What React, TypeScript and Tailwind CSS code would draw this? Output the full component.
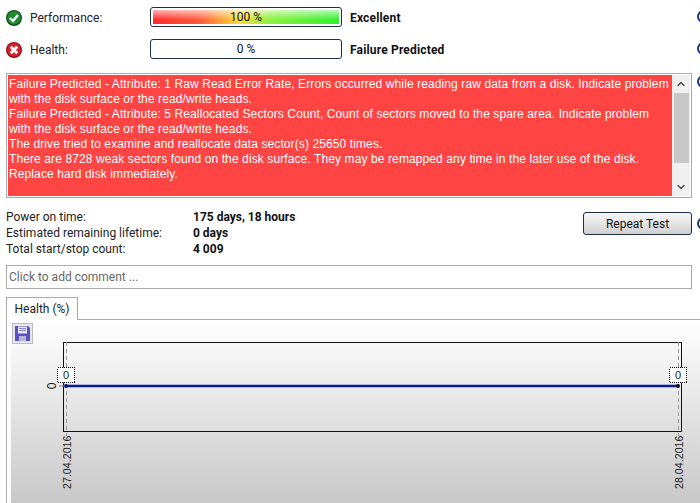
import React from "react";
import { ChevronUp, ChevronDown } from "lucide-react";

function StatusIcon({ ok }: { ok: boolean }) {
  return (
    <svg width="16" height="16" viewBox="0 0 16 16" className="shrink-0">
      <circle cx="8" cy="8" r="8" fill={ok ? "#12501f" : "#8e1018"} />
      <circle cx="8" cy="7.8" r="6.8" fill={ok ? "#1f8a2e" : "#d8212b"} />
      {ok ? (
        <path d="M4 8 L7 11 L12 5" stroke="#fff" strokeWidth="2.4" fill="none" />
      ) : (
        <path d="M4.8 4.8 L11.2 11.2 M11.2 4.8 L4.8 11.2" stroke="#fff" strokeWidth="2.8" fill="none" />
      )}
    </svg>
  );
}

function Meter({ label, ok, value, result, fill }: { label: string; ok: boolean; value: string; result: string; fill?: boolean }) {
  return (
    <div className="flex items-center h-5">
      <div className="w-[24px] shrink-0 pt-[1px]">
        <StatusIcon ok={ok} />
      </div>
      <div className="w-[120px] shrink-0 pt-[2px] text-[12px] text-[#222]">{label}</div>
      <div className="w-[192px] h-5 shrink-0 border border-[#1c2f4a] rounded-[3px] p-[2px] bg-white">
        <div
          className={
            "h-full flex items-center justify-center text-[12px] leading-none text-[#111] " +
            (fill
              ? "bg-[linear-gradient(180deg,rgba(255,255,255,0.65)_0%,rgba(255,255,255,0)_70%),linear-gradient(90deg,#ff2a2a_0%,#ff5a3a_25%,#ffd83a_46%,#90f040_62%,#30f030_100%)]"
              : "")
          }
        >
          {value}
        </div>
      </div>
      <div className="ml-2 pt-[2px] text-[12px] font-bold tracking-[0.17px] text-[#111]">{result}</div>
    </div>
  );
}

function ArcEdge({ top }: { top: string }) {
  return <div className={"absolute left-[697px] w-[13px] h-[13px] rounded-full border-2 border-[#1a3a7a] bg-white " + top} />;
}

const messages = [
  "Failure Predicted - Attribute: 1 Raw Read Error Rate, Errors occurred while reading raw data from a disk. Indicate problem with the disk surface or the read/write heads.",
  "Failure Predicted - Attribute: 5 Reallocated Sectors Count, Count of sectors moved to the spare area. Indicate problem with the disk surface or the read/write heads.",
  "The drive tried to examine and reallocate data sector(s) 25650 times.",
  "There are 8728 weak sectors found on the disk surface. They may be remapped any time in the later use of the disk.",
  "Replace hard disk immediately.",
];

const stats = [
  ["Power on time:", "175 days, 18 hours"],
  ["Estimated remaining lifetime:", "0 days"],
  ["Total start/stop count:", "4 009"],
];

function Chart() {
  return (
    <svg width="689" height="183" viewBox="0 0 689 183" className="absolute left-0 top-0">
      <g transform="translate(-11,-320)">
        <rect x="63.5" y="342.5" width="618" height="89" fill="none" stroke="#111" />
        <line x1="66.5" y1="342" x2="66.5" y2="436" stroke="#999" strokeDasharray="4 3" />
        <line x1="678.5" y1="342" x2="678.5" y2="436" stroke="#999" strokeDasharray="4 3" />
        <line x1="59" y1="386" x2="64" y2="386" stroke="#777" />
        <line x1="66" y1="386" x2="678" y2="386" stroke="#0a1a96" strokeWidth="2.5" />
        <circle cx="66" cy="386" r="2" fill="#0a1a60" />
        <circle cx="678" cy="386" r="2" fill="#111" />
        <rect x="57.5" y="367.5" width="17" height="15" fill="#fff" />
        <rect x="669.5" y="367.5" width="17" height="15" fill="#fff" />
        <rect x="57.5" y="367.5" width="17" height="15" fill="none" stroke="#000" strokeDasharray="1 1" shapeRendering="crispEdges" />
        <rect x="669.5" y="367.5" width="17" height="15" fill="none" stroke="#000" strokeDasharray="1 1" shapeRendering="crispEdges" />
        <text x="66" y="379" textAnchor="middle" fontSize="11" fill="#222" fontFamily="Liberation Sans">0</text>
        <text x="678" y="379" textAnchor="middle" fontSize="11" fill="#222" fontFamily="Liberation Sans">0</text>
        <text transform="translate(56,386) rotate(-90)" textAnchor="middle" fontSize="12" fill="#111" fontFamily="Liberation Sans">0</text>
        <text transform="translate(71,489) rotate(-90)" fontSize="10.7" fill="#222" fontFamily="Liberation Sans">27.04.2016</text>
        <text transform="translate(683,489) rotate(-90)" fontSize="10.7" fill="#222" fontFamily="Liberation Sans">28.04.2016</text>
      </g>
    </svg>
  );
}

export default function App() {
  return (
    <div className="relative w-[700px] h-[503px] overflow-hidden bg-white font-['Roboto',sans-serif] text-[#222]">
      <ArcEdge top="top-[10px]" />
      <ArcEdge top="top-[42px]" />
      <ArcEdge top="top-[75px]" />
      <ArcEdge top="top-[217px]" />

      <div className="pl-[6px] pr-[8px] pt-[7px]">
        <div className="flex flex-col gap-3">
          <Meter label="Performance:" ok value="100 %" result="Excellent" fill />
          <Meter label="Health:" ok={false} value="0 %" result="Failure Predicted" />
        </div>

        <div className="mt-[14px] h-[125px] border border-[#aaa] p-px flex font-['Liberation_Sans',sans-serif]">
          <div className="flex-1 bg-[#ff4444] text-white text-[12px] tracking-[0.105px] leading-[15px] pl-[1px] pt-[2px] pr-[1px]">
            {messages.map((m) => (
              <div key={m}>{m}</div>
            ))}
          </div>
          <div className="w-[18px] bg-[#f0f0f0] flex flex-col items-center text-[#444]">
            <ChevronUp size={12} strokeWidth={2.5} className="h-[18px]" />
            <div className="w-[15px] h-[70px] bg-[#c8c8c8]" />
            <div className="flex-1" />
            <ChevronDown size={12} strokeWidth={2.5} className="h-[18px]" />
          </div>
        </div>

        <div className="mt-[10px] flex items-start h-[54px]">
          <div className="flex-1 pt-[1px] text-[12px] leading-[16px]">
            {stats.map(([k, v]) => (
              <div key={k} className="flex">
                <div className="w-[187px] shrink-0">{k}</div>
                <div className="font-bold text-[#111]">{v}</div>
              </div>
            ))}
          </div>
          <button className="mt-[4px] w-[109px] h-[23px] border border-[#1c2f4a] rounded-[3px] text-[12px] text-[#111] bg-[linear-gradient(180deg,#f6f6f6_0%,#e4e4e4_50%,#cfcfcf_100%)]">
            Repeat Test
          </button>
        </div>

        <div className="mt-[3px] h-[24px] border border-[#aaa] px-[2px] flex items-center text-[12px] text-[#666]">
          Click to add comment ...
        </div>
      </div>

      <div className="mt-[8px] ml-[6px]">
        <div className="relative z-10 w-[72px] h-[23px] border border-b-0 border-[#aaa] bg-white flex items-center justify-center text-[12px]">
          Health (%)
        </div>
        <div className="-mt-px h-[184px] border-t border-l border-[#aaa] pl-[4px]">
          <div className="relative h-full bg-[linear-gradient(180deg,#ffffff_0%,#c8c8c8_100%)]">
            <Chart />
            <div className="absolute left-[1px] top-[3px] w-[21px] h-[21px] border border-[#bbb] bg-[#e6e6ee] flex items-center justify-center">
              <svg width="17" height="17" viewBox="0 0 17 17">
                <path d="M1 1 H14 L16 3 V16 H1 Z" fill="#5a50c8" />
                <rect x="4" y="1.5" width="9" height="7" fill="#e8e8f4" />
                <path d="M5 3.5 H12 M5 5.5 H12" stroke="#8a86c8" />
                <rect x="5" y="11" width="7" height="5" fill="#b8b8d0" />
              </svg>
            </div>
          </div>
        </div>
      </div>
    </div>
  );
}
